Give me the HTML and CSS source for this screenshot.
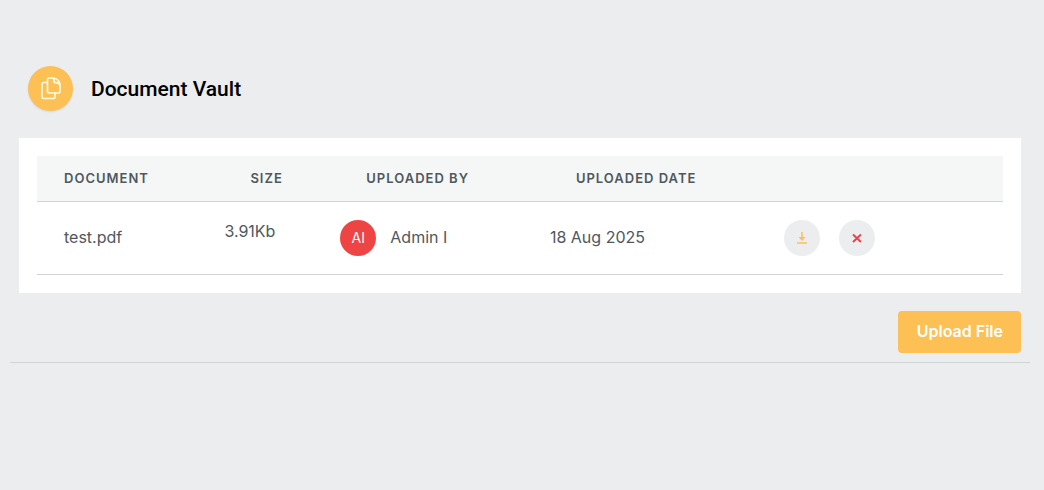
FILE: index.html
```html
<!DOCTYPE html>
<html lang="en">
<head>
  <meta charset="UTF-8" />
  <title>Document Vault</title>
  <link rel="stylesheet" href="styles.css">
</head>
<body>
  <section class="vault">
    <div class="vault-header">
      <span class="vault-icon">
        <svg width="20" height="23" viewBox="0 0 20 23" fill="none" stroke="currentColor" stroke-width="1.700" stroke-linejoin="round" stroke-linecap="round">
          <path d="M8 1h4q7 1 7 8v5.500a1.500 1.500 0 0 1-1.500 1.500H8a1.500 1.500 0 0 1-1.500-1.500v-12A1.500 1.500 0 0 1 8 1z" />
          <path d="M12 1q1.500 1 1 4.500q3.500-.300 5.500 2" />
          <path d="M6 5.500H2.500A1.500 1.500 0 0 0 1 7v13a1.500 1.500 0 0 0 1.500 1.500h10A1.500 1.500 0 0 0 14 20v-3.500" />
        </svg>
      </span>
      <h3>Document Vault</h3>
    </div>

    <div class="card">
      <table class="documents">
        <thead>
          <tr>
            <th class="col-document">Document</th>
            <th class="col-size">Size</th>
            <th class="col-user">Uploaded By</th>
            <th class="col-date">Uploaded Date</th>
            <th></th>
          </tr>
        </thead>
        <tbody>
          <tr>
            <td class="document-name">test.pdf</td>
            <td class="document-size">3.91Kb</td>
            <td>
              <div class="user">
                <span class="avatar">AI</span>
                <span class="user-name">Admin I</span>
              </div>
            </td>
            <td class="document-date">18 Aug 2025</td>
            <td>
              <div class="actions">
                <button class="btn-icon btn-download" type="button" aria-label="Download">
                  <svg width="12" height="12" viewBox="0 0 12 12" fill="none" stroke="currentColor" stroke-width="1.500">
                    <path d="M6 0v7M1 11h10" />
                    <path d="M2.500 5h7L6 9z" fill="currentColor" stroke="none" />
                  </svg>
                </button>
                <button class="btn-icon btn-delete" type="button" aria-label="Delete">
                  <svg width="12" height="12" viewBox="0 0 12 12" fill="none" stroke="currentColor" stroke-width="2">
                    <path d="M2 2.500l8 7.500M10 2.500L2 10" />
                  </svg>
                </button>
              </div>
            </td>
          </tr>
        </tbody>
      </table>
    </div>

    <div class="vault-footer">
      <button class="btn-upload" type="button">Upload File</button>
    </div>
  </section>
</body>
</html>
```
FILE: styles.css
```css
* {
  box-sizing: border-box;
}

body {
  margin: 0;
  background: #ecedef;
  color: #4f585e;
  font-family: Inter, sans-serif;
  font-size: 16px;
  line-height: 24px;
}

.vault {
  margin: 48px 14px 0 10px;
  padding: 18px 9px 9px;
  border-bottom: 1px solid #d2d3d5;
}

.vault-header {
  display: flex;
  align-items: center;
  gap: 18px;
  padding-left: 9px;
  margin-bottom: 27px;
}

.vault-icon {
  display: flex;
  align-items: center;
  justify-content: center;
  width: 45px;
  height: 45px;
  border-radius: 50%;
  background: #fdc055;
  color: #fffbe0;
  box-shadow: 0 1px 2px rgba(0, 0, 0, 0.1);
}

.vault-header h3 {
  margin: 0;
  color: #000;
  font-family: Roboto, sans-serif;
  font-size: 21px;
  font-weight: 500;
}

.card {
  padding: 18px;
  background: #fff;
}

.documents {
  width: 100%;
  table-layout: fixed;
  border-collapse: separate;
  border-spacing: 0;
}

.documents th {
  padding: 10px 0 11px 26px;
  background: #f5f7f7;
  border-bottom: 1px solid #d2d3d5;
  font-size: 13px;
  font-weight: 600;
  letter-spacing: 1px;
  text-align: left;
  text-transform: uppercase;
}

.documents td {
  padding: 18px 0;
  border-bottom: 1px solid #d2d3d5;
  vertical-align: middle;
}

.documents .col-document,
.documents .document-name {
  padding-left: 27px;
}

.documents .document-name,
.documents .document-date {
  padding-bottom: 20px;
}

.documents .document-size {
  line-height: 22px;
  vertical-align: top;
}

.col-document {
  width: 19.4%;
}

.col-size {
  width: 12%;
}

.col-user {
  width: 21.7%;
}

.col-date {
  width: 24.2%;
}

.user {
  display: flex;
  align-items: center;
  gap: 14px;
}

.user-name {
  padding-bottom: 2px;
}

.avatar {
  width: 36px;
  height: 36px;
  border-radius: 50%;
  background: #ef4444;
  color: #fff;
  font-size: 14px;
  line-height: 36px;
  text-align: center;
}

.actions {
  display: flex;
  gap: 19px;
}

.btn-icon {
  display: flex;
  align-items: center;
  justify-content: center;
  width: 36px;
  height: 36px;
  padding: 0;
  border: none;
  border-radius: 50%;
  background: #ecedef;
  cursor: pointer;
}

.btn-download {
  color: #fdc055;
}

.btn-delete {
  color: #e0474c;
}

.vault-footer {
  display: flex;
  justify-content: flex-end;
  margin-top: 18px;
}

.btn-upload {
  padding: 8px 18px 10px 19px;
  border: none;
  border-radius: 4px;
  background: #fdc055;
  color: #fff;
  font-family: inherit;
  font-size: 16px;
  font-weight: 600;
  line-height: 24px;
  cursor: pointer;
}
```
